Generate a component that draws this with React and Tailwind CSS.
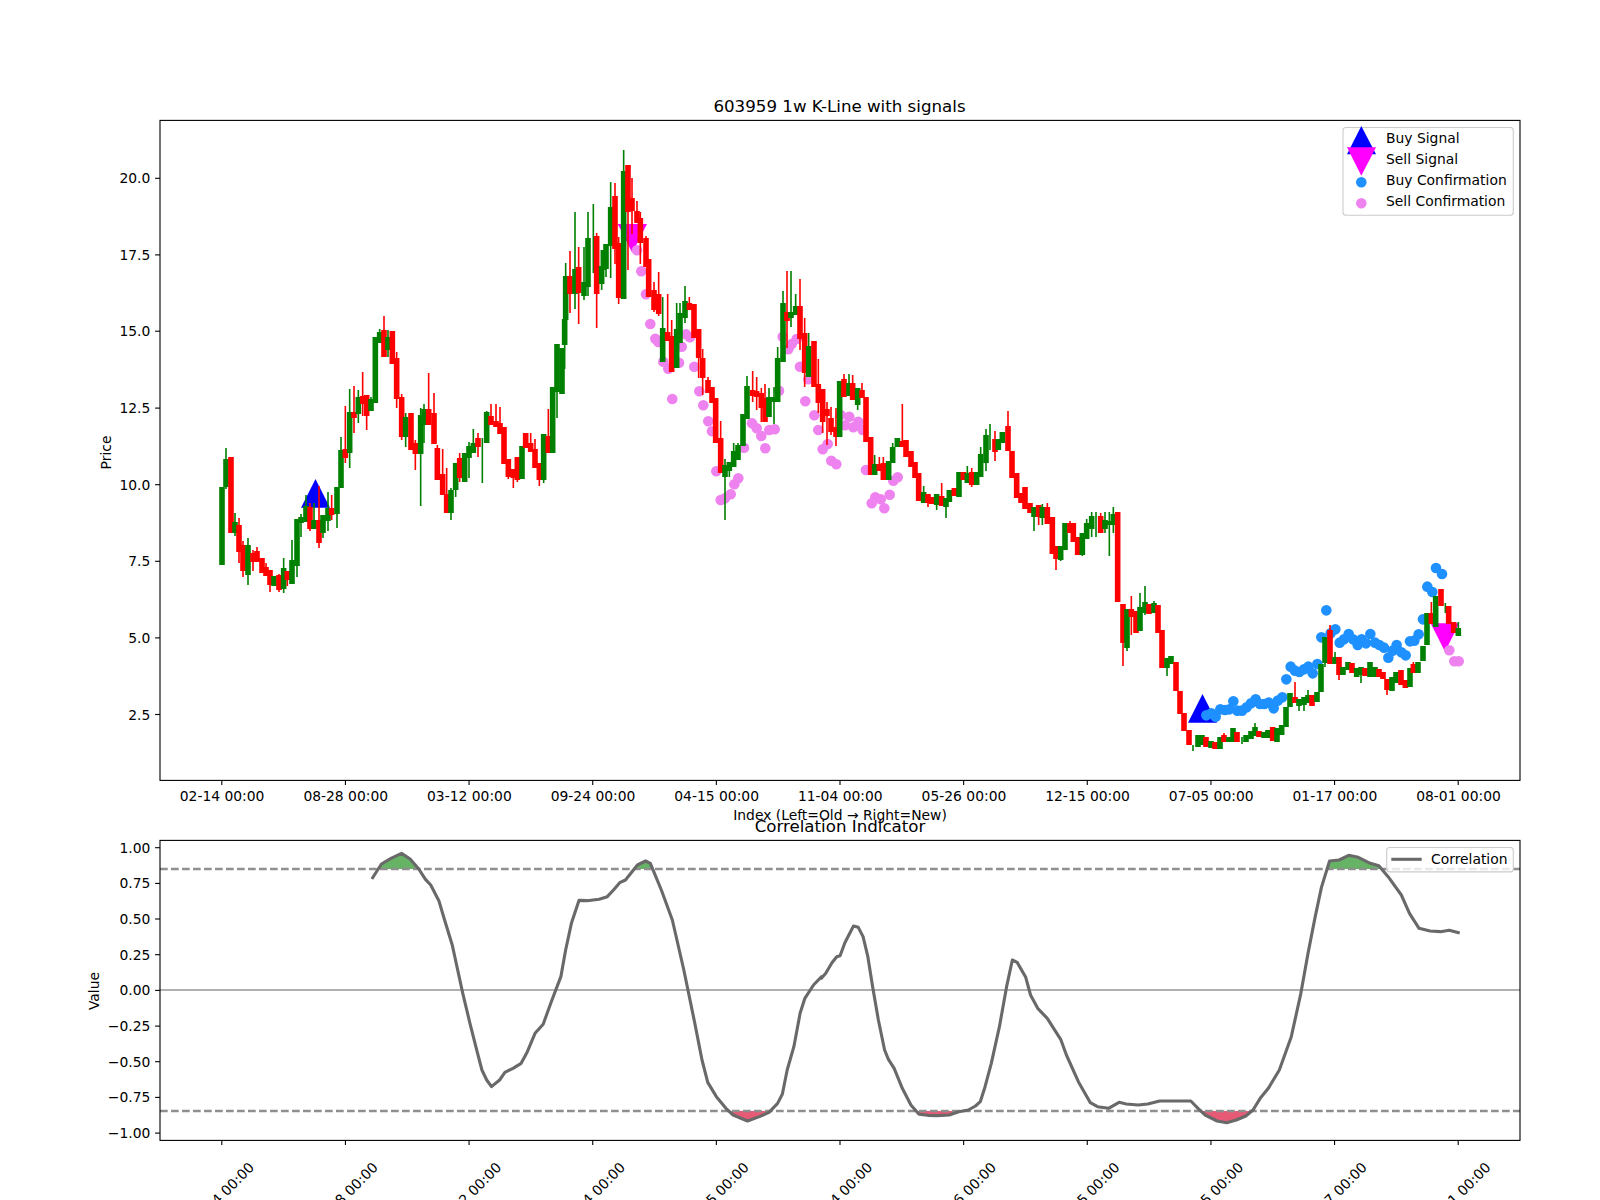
// App.jsx
// 603959 weekly K-line chart with signals + correlation indicator

const tickX = [0, 1, 2, 3, 4, 5, 6, 7, 8, 9, 10].map(k => 221.8 + 123.64 * k);
const tickLabels = ['02-14 00:00', '08-28 00:00', '03-12 00:00', '09-24 00:00', '04-15 00:00', '11-04 00:00', '05-26 00:00', '12-15 00:00', '07-05 00:00', '01-17 00:00', '08-01 00:00'];

const priceTicks = [['20.0', 178.3], ['17.5', 254.9], ['15.0', 331.2], ['12.5', 408.1], ['10.0', 484.7], ['7.5', 561.3], ['5.0', 637.9], ['2.5', 714.5]];
const corrTicks = [['1.00', 847.7], ['0.75', 883.4], ['0.50', 919], ['0.25', 954.7], ['0.00', 990.4], ['−0.25', 1026.1], ['−0.50', 1061.7], ['−0.75', 1097.4], ['−1.00', 1133.1]];

// candles: [x in crop, colour, body top, body bottom, wick top, wick bottom], y in page px
const candleGroups = [
  [205, [
    [51, 'g', 487, 565], [63, 'g', 459, 487, 448, 489], [78, 'r', 457, 533], [90, 'g', 522, 533, 513, 536],
    [102, 'r', 525, 552, 518, 563], [114, 'r', 545, 571, 541, 577], [129, 'g', 545, 575, 538, 585], [144, 'r', 553, 562, 550, 571],
    [156, 'r', 551, 562, 547, 562], [171, 'r', 558, 573], [183, 'r', 567, 576, 563, 576], [195, 'r', 570, 585, 570, 592],
    [207, 'g', 576, 586], [222, 'r', 575, 590, 574, 592], [236, 'g', 568, 589, 558, 593], [247, 'r', 571, 580, 571, 586],
    [261, 'g', 560, 584, 540, 584], [276, 'g', 519, 566, 519, 577], [288, 'g', 517, 523, 514, 537], [303, 'g', 506, 522, 495, 522],
    [315, 'r', 507, 529, 503, 531], [327, 'g', 520, 529, 503, 529], [342, 'r', 520, 543, 486, 548], [354, 'g', 515, 533, 515, 538],
    [369, 'g', 508, 521, 492, 531], [380, 'r', 508, 515, 495, 520], [396, 'g', 487, 514, 487, 528],
  ]],
  [150, [
    [573, 'g', 450, 488, 437, 488], [586, 'r', 449, 458, 406, 463], [599, 'g', 412, 453, 389, 468], [612, 'r', 412, 418, 386, 433],
    [625, 'g', 397, 414, 390, 423], [638, 'r', 396, 404, 372, 416], [650, 'r', 395, 416, 395, 430], [663, 'g', 399, 411, 397, 411],
    [676, 'g', 337, 403], [689, 'g', 332, 343, 329, 343], [702, 'r', 330, 357, 316, 357], [714, 'g', 337, 350, 330, 357],
    [727, 'r', 331, 364], [740, 'r', 358, 399, 352, 408], [755, 'r', 397, 437, 394, 440], [767, 'g', 417, 437, 413, 447],
    [783, 'r', 413, 450], [796, 'r', 443, 454, 440, 470], [812, 'g', 415, 454, 408, 506], [822, 'g', 409, 425, 404, 443],
    [836, 'r', 409, 425, 373, 425], [852, 'r', 413, 444, 393, 444], [862, 'r', 448, 480, 445, 480], [878, 'r', 474, 495, 449, 495],
    [890, 'r', 494, 513, 468, 513], [903, 'g', 490, 513, 488, 520], [917, 'g', 463, 490, 463, 497], [929, 'r', 458, 478, 453, 482],
    [944, 'g', 453, 482], [957, 'g', 446, 458, 442, 478], [970, 'g', 443, 453, 429, 453], [984, 'r', 438, 447, 433, 457],
    [997, 'g', 438, 438, 438, 483], [1010, 'g', 412, 443, 411, 443], [1023, 'r', 416, 425, 404, 425], [1038, 'r', 421, 427, 404, 427],
    [1050, 'r', 423, 434, 407, 434], [1062, 'r', 427, 464], [1075, 'r', 459, 477, 459, 479], [1090, 'r', 469, 478, 469, 488],
    [1102, 'r', 457, 480, 457, 482], [1116, 'g', 446, 479], [1127, 'r', 433, 448], [1142, 'r', 443, 452, 433, 452],
    [1155, 'r', 449, 468, 439, 468], [1168, 'r', 463, 480, 463, 486], [1181, 'g', 434, 480, 434, 483], [1195, 'r', 436, 453, 409, 453],
    [1208, 'g', 387, 453], [1221, 'g', 344, 392, 344, 418], [1236, 'g', 348, 394], [1244, 'g', 319, 345, 319, 369],
  ]],
  [560, [
    [17, 'g', 276, 320, 263, 320], [30, 'r', 276, 294, 251, 313], [45, 'g', 269, 294, 212, 309], [56, 'r', 267, 293, 247, 324],
    [72, 'g', 282, 296, 247, 300], [84, 'g', 238, 287, 212, 296], [100, 'g', 240, 240, 204, 273], [110, 'r', 236, 294, 233, 328],
    [125, 'g', 266, 284, 266, 290], [130, 'g', 250, 270], [138, 'g', 244, 269, 244, 277], [152, 'g', 207, 246, 182, 278],
    [165, 'r', 196, 249, 183, 264], [176, 'r', 243, 298, 237, 304], [191, 'g', 171, 299, 150, 299], [204, 'r', 165, 212, 165, 270],
    [216, 'r', 198, 211, 178, 234], [231, 'r', 211, 223, 201, 223], [241, 'r', 218, 243, 212, 264], [258, 'r', 238, 267, 236, 267],
  ]],
  [600, [
    [146, 'r', 259, 297], [162, 'r', 290, 310, 282, 312], [176, 'r', 294, 314, 272, 316], [188, 'g', 328, 362, 297, 362],
    [203, 'r', 332, 341, 294, 341], [215, 'r', 336, 372, 320, 372], [230, 'g', 329, 368, 303, 368], [240, 'g', 313, 343, 303, 343],
    [255, 'g', 301, 318, 286, 323], [268, 'r', 303, 310, 297, 310], [282, 'r', 304, 338], [296, 'r', 329, 358, 329, 378],
    [308, 'r', 358, 378, 349, 395], [324, 'r', 380, 393, 377, 393], [336, 'r', 387, 403], [347, 'r', 398, 443],
    [362, 'r', 438, 473, 421, 473], [375, 'g', 465, 477, 459, 520], [388, 'g', 462, 471, 462, 477], [401, 'g', 451, 467, 443, 467],
    [414, 'g', 445, 460, 443, 460], [429, 'g', 414, 446], [441, 'g', 386, 419, 376, 419], [458, 'r', 390, 396, 371, 402],
    [470, 'r', 391, 397, 377, 410], [484, 'r', 393, 408, 388, 422], [495, 'r', 398, 422, 384, 422], [507, 'g', 397, 417, 388, 417],
    [522, 'g', 397, 402, 387, 424], [533, 'g', 358, 402, 347, 402], [549, 'g', 303, 362, 291, 362], [561, 'r', 312, 321, 271, 348],
    [573, 'g', 312, 318, 271, 327], [587, 'g', 306, 315, 294, 315], [600, 'r', 306, 339, 279, 350], [614, 'r', 333, 373, 318, 387],
    [626, 'g', 346, 377, 333, 377], [642, 'r', 341, 387], [655, 'r', 384, 403, 359, 413], [668, 'r', 389, 422, 389, 433],
    [681, 'r', 409, 416, 402, 445], [693, 'r', 418, 432, 407, 435], [708, 'r', 427, 437, 408, 446], [719, 'g', 381, 437],
    [732, 'r', 379, 397, 374, 397], [747, 'g', 383, 396, 374, 396], [758, 'r', 383, 400, 375, 400], [773, 'g', 388, 405, 388, 410],
    [786, 'r', 390, 398, 383, 398], [798, 'r', 397, 442], [812, 'r', 437, 475], [824, 'g', 464, 475, 455, 475],
    [838, 'r', 464, 471, 457, 471], [850, 'r', 463, 480, 457, 480], [866, 'g', 461, 480], [878, 'g', 447, 463, 443, 463],
    [892, 'g', 438, 447], [907, 'r', 441, 447, 404, 447], [918, 'r', 440, 457], [933, 'r', 451, 467], [945, 'r', 462, 478],
    [956, 'r', 473, 501], [971, 'g', 492, 503, 486, 503], [984, 'r', 494, 503, 494, 507], [995, 'r', 497, 504], [1010, 'g', 494, 505, 494, 510],
    [1025, 'r', 496, 506, 483, 506], [1038, 'g', 498, 507, 498, 518], [1048, 'g', 490, 502], [1063, 'r', 488, 496], [1077, 'g', 472, 497],
    [1090, 'r', 472, 480], [1102, 'g', 473, 483, 466, 483], [1115, 'r', 472, 485, 468, 487], [1130, 'g', 472, 485], [1142, 'g', 454, 477, 447, 477],
    [1158, 'g', 435, 463, 429, 471], [1170, 'g', 440, 440, 424, 450], [1185, 'r', 439, 452, 431, 461], [1195, 'g', 439, 450], [1207, 'g', 432, 443],
    [1224, 'r', 426, 451, 411, 451], [1236, 'r', 451, 478], [1250, 'r', 473, 498], [1263, 'r', 493, 503], [1275, 'r', 487, 509],
    [1290, 'r', 503, 513], [1302, 'g', 507, 517, 507, 531], [1316, 'r', 505, 517, 505, 525],
  ]],
  [1040, [
    [7, 'g', 507, 518, 504, 525], [22, 'r', 507, 524, 503, 524], [37, 'r', 517, 554], [48, 'r', 546, 559, 546, 570], [62, 'g', 546, 560, 546, 561],
    [75, 'g', 523, 550], [90, 'r', 523, 533, 521, 533], [100, 'r', 523, 542], [113, 'r', 537, 555], [127, 'g', 533, 555, 533, 556],
    [140, 'g', 523, 539, 519, 539], [155, 'g', 516, 529, 512, 537], [168, 'g', 512, 512, 512, 537], [182, 'r', 516, 533, 513, 533], [195, 'g', 520, 529, 512, 533],
    [208, 'g', 521, 525, 512, 556], [220, 'g', 514, 525, 507, 533], [233, 'r', 512, 602], [249, 'r', 604, 643, 604, 666], [261, 'g', 609, 648, 609, 651],
    [274, 'r', 609, 617, 596, 635], [288, 'r', 611, 633], [300, 'g', 607, 631, 593, 631], [315, 'g', 602, 613, 586, 615], [327, 'r', 604, 614],
    [342, 'g', 603, 613, 601, 613], [354, 'r', 605, 633], [366, 'r', 630, 668], [381, 'g', 658, 668, 658, 676], [393, 'g', 656, 664],
    [408, 'r', 662, 691], [420, 'r', 691, 714], [432, 'r', 713, 731], [447, 'r', 730, 745], [459, 'g', 745, 745, 745, 751],
    [474, 'g', 735, 747], [486, 'g', 735, 745], [498, 'r', 737, 747], [513, 'g', 741, 748], [525, 'r', 742, 749], [540, 'g', 737, 749],
    [552, 'r', 735, 742, 733, 742], [567, 'g', 737, 742], [579, 'g', 728, 742], [591, 'r', 732, 742], [606, 'g', 737, 737, 737, 744],
    [618, 'g', 735, 742], [633, 'g', 731, 739], [645, 'g', 727, 736, 723, 736], [657, 'r', 731, 737], [672, 'g', 732, 738], [684, 'g', 730, 738],
    [698, 'r', 727, 741], [711, 'g', 728, 742], [725, 'g', 725, 735], [738, 'g', 707, 727], [750, 'g', 693, 707], [765, 'r', 697, 703, 682, 703],
    [777, 'g', 699, 706, 699, 711], [792, 'g', 697, 705, 697, 711], [804, 'g', 695, 703, 690, 703], [816, 'r', 695, 706], [831, 'g', 692, 702],
    [843, 'g', 664, 692], [855, 'g', 637, 663, 637, 667], [870, 'r', 630, 664, 625, 664], [885, 'g', 657, 664, 652, 664], [897, 'r', 657, 675, 657, 680],
    [909, 'g', 667, 675], [924, 'g', 662, 670], [936, 'r', 663, 673], [950, 'g', 668, 677], [963, 'g', 667, 675, 667, 683], [975, 'r', 668, 676],
    [990, 'g', 662, 677], [1005, 'g', 667, 677], [1017, 'r', 669, 677], [1029, 'r', 672, 679], [1041, 'r', 679, 690, 679, 695], [1056, 'g', 677, 691],
    [1068, 'g', 672, 683], [1083, 'r', 670, 685], [1096, 'r', 680, 688], [1110, 'g', 668, 687], [1120, 'r', 664, 673, 662, 673], [1134, 'g', 662, 673],
    [1149, 'g', 646, 661], [1161, 'g', 613, 645], [1174, 'r', 613, 624, 602, 624], [1187, 'g', 596, 627], [1203, 'r', 589, 606], [1216, 'g', 603, 603, 603, 613],
    [1226, 'r', 606, 624], [1241, 'r', 622, 633], [1255, 'g', 628, 636, 622, 636],
  ]],
];

const candles = candleGroups.flatMap(([off, rows]) =>
  rows.map(([zx, c, top, bot, wt, wb]) => ({
    x: off + zx / 3, color: c === 'r' ? '#ff0000' : '#008000', top, bot, wt: wt ?? top, wb: wb ?? bot,
  })));

const sellDots = [
  [637, 250.3], [641.3, 271.3], [646, 294.3], [650.3, 324], [655.3, 338.7], [658.3, 342], [663.3, 361.7], [668.3, 368.7], [672.3, 399],
  [679, 362.7], [681.7, 346.7], [686, 334.3], [690, 337.3], [694.3, 366.7], [699.3, 391.3], [703.3, 405.3], [708.3, 421.3], [712, 431.3],
  [716.3, 471.3], [720.7, 500], [725, 498.3], [730.7, 494.3], [734.3, 484.3], [738.3, 478.3], [744, 447.7], [752, 423.3], [756.7, 428.3],
  [761.3, 436], [765.3, 448.3], [769.3, 430], [774.7, 429.3], [779, 390.7], [782.7, 336.7], [788.3, 349.3], [791.7, 344], [796.7, 339],
  [800, 366.7], [805.3, 401.3], [808.3, 379.3], [814.3, 415.3], [818.3, 430], [822.7, 449.3], [827.7, 444], [831.3, 460.7], [836.3, 464.3],
  [840.7, 415], [845, 425.3], [849.3, 416.7], [853.3, 427.3], [858.3, 421.7], [862.7, 430], [866, 470], [871.7, 503.3], [875.3, 497.3],
  [880.7, 499.3], [884.3, 508.3], [889.7, 494.7], [893.3, 480.7], [897.7, 477.3], [1449.3, 650.3], [1454.3, 661.3], [1458.7, 661.3],
];

const buyDots = [
  [499, 706], [514, 700], [527, 710], [541, 688], [555, 690], [568, 688], [580, 664], [592, 692], [606, 692], [620, 682], [633, 670],
  [647, 658], [660, 672], [673, 672], [686, 668], [701, 685], [713, 662], [727, 652], [739, 598], [752, 560], [765, 572], [778, 576],
  [792, 568], [805, 560], [818, 580], [832, 552], [844, 472], [859, 391], [872, 460], [886, 448], [899, 488], [912, 478], [926, 462],
  [939, 478], [953, 495], [965, 478], [978, 490], [991, 462], [1005, 488], [1018, 495], [1032, 503], [1045, 533], [1058, 512], [1070, 495],
  [1084, 517], [1097, 526], [1110, 484], [1123, 482], [1136, 463], [1149, 418], [1162, 320], [1177, 336], [1188, 264], [1206, 282],
].map(([x, y]) => [1040 + x / 3, 480 + y / 3]);

// correlation curve, read from the two lower crops
const corrLeft = [
  [610, 297], [630, 252], [650, 235], [672, 220], [690, 237], [708, 267], [722, 298], [733, 315], [750, 362], [762, 420], [778, 495], [800, 640],
  [815, 730], [830, 815], [840, 870], [850, 900], [860, 920], [877, 900], [888, 877], [905, 865], [922, 850], [935, 815], [951, 760], [968, 733],
  [985, 665], [1005, 590], [1015, 510], [1027, 430], [1043, 361], [1060, 362], [1085, 358], [1102, 350], [1115, 330], [1128, 308], [1140, 300],
  [1165, 255], [1182, 243], [1192, 250], [1215, 330], [1238, 420], [1262, 570], [1285, 730], [1300, 840], [1312, 907], [1330, 950], [1350, 985],
  [1365, 1005], [1395, 1023], [1420, 1010], [1440, 997], [1458, 970], [1468, 942], [1478, 870], [1492, 800], [1505, 700], [1515, 655], [1533, 615], [1550, 590],
].map(([x, y]) => [80 + x / 2.09, 780 + y / 3]);
const corrRight = [
  [3, 595], [12, 580], [25, 548], [35, 530], [42, 527], [52, 488], [70, 438], [80, 442], [90, 470], [100, 530], [110, 620], [122, 720], [135, 810],
  [143, 838], [155, 865], [172, 925], [190, 975], [207, 1003], [225, 1006], [245, 1007], [270, 1005], [290, 995], [310, 990], [325, 978], [335, 965],
  [345, 920], [358, 850], [375, 740], [390, 620], [402, 540], [412, 547], [430, 592], [440, 645], [455, 685], [475, 715], [503, 778], [515, 825],
  [540, 905], [565, 968], [580, 980], [603, 985], [625, 967], [640, 972], [665, 975], [685, 972], [710, 963], [775, 963], [790, 985], [805, 1005],
  [830, 1023], [850, 1028], [870, 1020], [890, 1008], [905, 990], [920, 955], [937, 925], [960, 870], [985, 770], [1005, 640], [1020, 520], [1035, 410],
  [1048, 322], [1065, 243], [1085, 240], [1105, 226], [1125, 232], [1150, 250], [1168, 257], [1190, 295], [1215, 345], [1232, 400], [1252, 445],
  [1275, 453], [1297, 455], [1315, 451], [1337, 459],
].map(([x, y]) => [820 + x / 2.09, 780 + y / 3]);

const corr = [...corrLeft, ...corrRight];
const corrPts = corr.map(p => p.join(',')).join(' ');
const first = corr[0][0];
const last = corr[corr.length - 1][0];

const label = "font-['DejaVu_Sans'] text-[13.89px]";

export default function App() {
  return (
    <div className="w-[1600px] h-[1200px] bg-white overflow-hidden">
      <svg width="1600" height="1200" viewBox="0 0 1600 1200" className="block">
        <defs>
          <clipPath id="aboveBand"><rect x="160" y="840" width="1360" height="29" /></clipPath>
          <clipPath id="belowBand"><rect x="160" y="1111" width="1360" height="29" /></clipPath>
        </defs>

        {/* K-line panel */}
        <text x="839.5" y="111.7" textAnchor="middle" className="font-['DejaVu_Sans'] text-[16.67px]">603959 1w K-Line with signals</text>

        <polygon points="301,507.7 315.5,479 330,507.7" fill="#0000ff" />
        <polygon points="1188,722.7 1202.5,694 1217,722.7" fill="#0000ff" />
        <polygon points="617.7,224 647,224 632.3,252.7" fill="#ff00ff" />
        <polygon points="1430.7,623.3 1459.3,623.3 1445,651.7" fill="#ff00ff" />
        {buyDots.map(([x, y], i) => <circle key={i} cx={x} cy={y} r="5.3" fill="#1e90ff" />)}
        {sellDots.map(([x, y], i) => <circle key={i} cx={x} cy={y} r="5.3" fill="#ee82ee" />)}

        {candles.map((c, i) => (
          <g key={i} fill={c.color}>
            <rect x={c.x - 0.8} y={c.wt} width="1.6" height={c.wb - c.wt} />
            <rect x={c.x - 2.8} y={c.top} width="5.6" height={c.bot - c.top} />
          </g>
        ))}

        <rect x="160" y="120.4" width="1360" height="660" fill="none" stroke="#000" strokeWidth="1.1" />
        {priceTicks.map(([t, y]) => (
          <g key={t}>
            <line x1="155.1" x2="160" y1={y} y2={y} stroke="#000" strokeWidth="1.1" />
            <text x="150.3" y={y + 5} textAnchor="end" className={label}>{t}</text>
          </g>
        ))}
        {tickX.map((x, i) => (
          <g key={x}>
            <line x1={x} x2={x} y1="780" y2="784.9" stroke="#000" strokeWidth="1.1" />
            <text x={x + 0.3} y="801" textAnchor="middle" className={label}>{tickLabels[i]}</text>
          </g>
        ))}
        <text x="840" y="820" textAnchor="middle" className={label}>Index (Left=Old → Right=New)</text>
        <text transform="translate(111 452.5) rotate(-90)" textAnchor="middle" className={label}>Price</text>

        {/* legend */}
        <rect x="1343" y="127.5" width="170.3" height="87.8" rx="3" fill="#fff" fillOpacity="0.8" stroke="#ccc" strokeWidth="1.1" />
        <polygon points="1347,154.3 1361.3,126 1376,154.3" fill="#0000ff" />
        <polygon points="1347,147.3 1376,147.3 1361.3,175.7" fill="#ff00ff" />
        <circle cx="1361.3" cy="182.3" r="5.3" fill="#1e90ff" />
        <circle cx="1361.3" cy="203.3" r="5.3" fill="#ee82ee" />
        <text x="1386" y="143.3" className={label}>Buy Signal</text>
        <text x="1386" y="164.3" className={label}>Sell Signal</text>
        <text x="1386" y="185" className={label}>Buy Confirmation</text>
        <text x="1386" y="206" className={label}>Sell Confirmation</text>

        {/* correlation panel */}
        <text x="840" y="831.7" textAnchor="middle" className="font-['DejaVu_Sans'] text-[16.67px]">Correlation Indicator</text>

        <polygon points={`${corrPts} ${last},869 ${first},869`} fill="#008000" fillOpacity="0.6" clipPath="url(#aboveBand)" />
        <polygon points={`${corrPts} ${last},1111 ${first},1111`} fill="#dc143c" fillOpacity="0.7" clipPath="url(#belowBand)" />

        <line x1="160" x2="1520" y1="869" y2="869" stroke="#8f8f8f" strokeWidth="2.3" strokeDasharray="7.7 3.3" />
        <line x1="160" x2="1520" y1="1111" y2="1111" stroke="#8f8f8f" strokeWidth="2.3" strokeDasharray="7.7 3.3" />
        <line x1="160" x2="1520" y1="990" y2="990" stroke="#b0b0b0" strokeWidth="2.2" />
        <polyline points={corrPts} fill="none" stroke="#696969" strokeWidth="3.1" strokeLinejoin="round" />

        <rect x="160" y="840.4" width="1360" height="300" fill="none" stroke="#000" strokeWidth="1.1" />
        {corrTicks.map(([t, y]) => (
          <g key={t}>
            <line x1="155.1" x2="160" y1={y} y2={y} stroke="#000" strokeWidth="1.1" />
            <text x="150.3" y={y + 5} textAnchor="end" className={label}>{t}</text>
          </g>
        ))}
        {tickX.map((x, i) => (
          <g key={x}>
            <line x1={x} x2={x} y1="1140" y2="1144.9" stroke="#000" strokeWidth="1.1" />
            <text transform={`translate(${x + 0.5} 1195.5) rotate(-45)`} textAnchor="middle" dominantBaseline="middle" className={label}>{tickLabels[i]}</text>
          </g>
        ))}
        <text transform="translate(99 991) rotate(-90)" textAnchor="middle" className={label}>Value</text>

        <rect x="1386.7" y="847.5" width="126.6" height="24.4" rx="3" fill="#fff" fillOpacity="0.8" stroke="#ccc" strokeWidth="1.1" />
        <line x1="1391.3" x2="1421.7" y1="859.3" y2="859.3" stroke="#696969" strokeWidth="3.1" />
        <text x="1431" y="864" className={label}>Correlation</text>
      </svg>
    </div>
  );
}
